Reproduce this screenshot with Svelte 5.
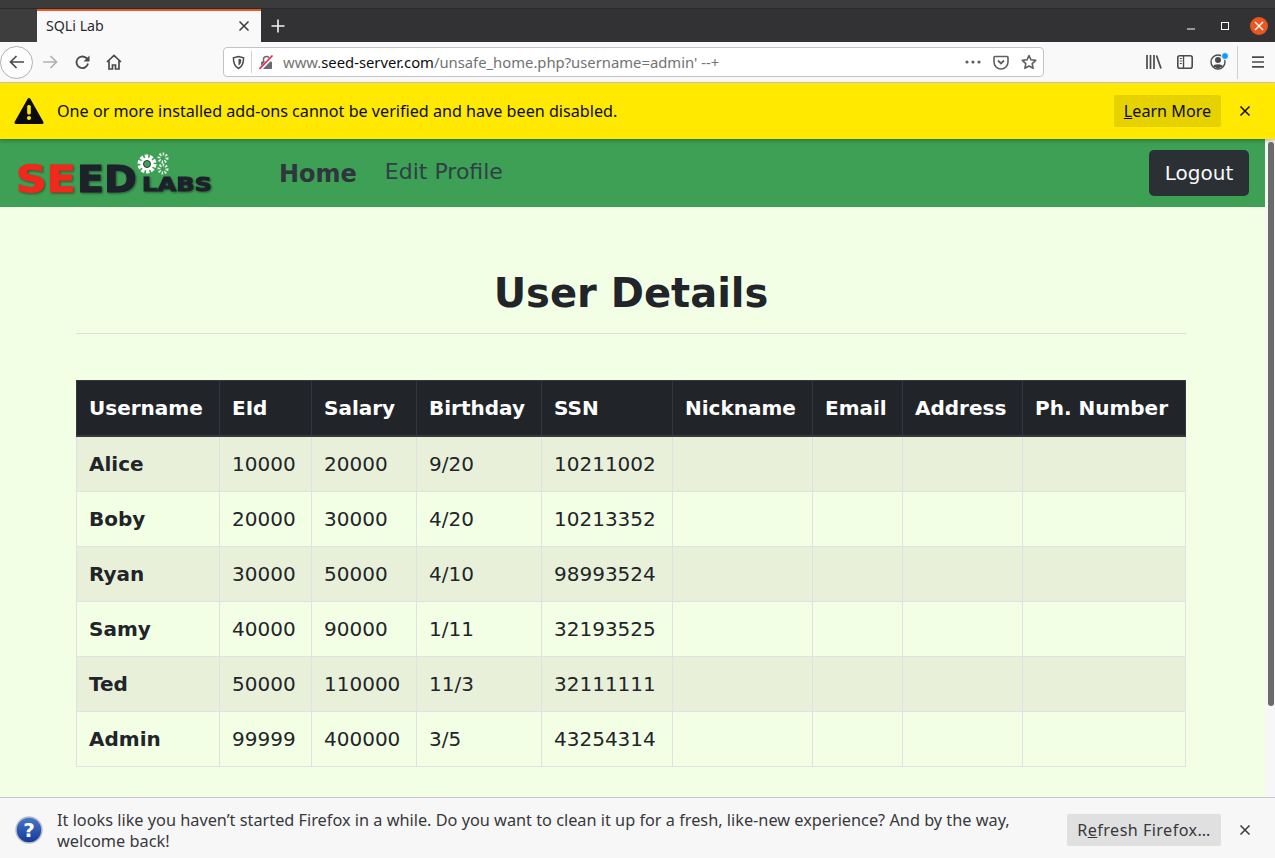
<script>
  const cols = [
    { name: 'Username', w: 143 }, { name: 'EId', w: 92 }, { name: 'Salary', w: 105 },
    { name: 'Birthday', w: 125 }, { name: 'SSN', w: 131 }, { name: 'Nickname', w: 140 },
    { name: 'Email', w: 90 }, { name: 'Address', w: 120 }, { name: 'Ph. Number', w: 163 }
  ];
  const rows = [
    ['Alice', '10000', '20000', '9/20', '10211002'],
    ['Boby', '20000', '30000', '4/20', '10213352'],
    ['Ryan', '30000', '50000', '4/10', '98993524'],
    ['Samy', '40000', '90000', '1/11', '32193525'],
    ['Ted', '50000', '110000', '11/3', '32111111'],
    ['Admin', '99999', '400000', '3/5', '43254314']
  ];
</script>

<div class="window">
  <div class="titlestrip"></div>
  <div class="tabbar">
    <div class="tabspacer"></div>
    <div class="tab">
      <span class="tabtitle">SQLi Lab</span>
      <svg class="tabclose" width="12" height="12" viewBox="0 0 12 12"><path d="M1.5 1.5l9 9M10.5 1.5l-9 9" stroke="#3a3a3c" stroke-width="1.5"/></svg>
    </div>
    <svg class="newtab" width="16" height="16" viewBox="0 0 16 16"><path d="M8 1.5v13M1.5 8h13" stroke="#f2f2f2" stroke-width="1.6"/></svg>
    <div class="wincontrols">
      <svg class="wmin" width="10" height="10" viewBox="0 0 10 10"><path d="M1 8h8" stroke="#fff" stroke-width="1"/></svg>
      <svg class="wmax" width="10" height="10" viewBox="0 0 10 10"><rect x="1.500" y="1.500" width="7" height="7" fill="none" stroke="#fff" stroke-width="1"/></svg>
      <span class="closewin"><svg width="10" height="10" viewBox="0 0 10 10"><path d="M1 1l8 8M9 1l-8 8" stroke="#fff" stroke-width="1.400"/></svg></span>
    </div>
  </div>

  <div class="toolbar">
    <span class="backbtn">
      <svg width="18" height="18" viewBox="0 0 18 18"><path d="M16 9H2.500M8.500 3L2.500 9l6 6" fill="none" stroke="#4a4a4f" stroke-width="1.700"/></svg>
    </span>
    <svg class="fwd" width="18" height="18" viewBox="0 0 18 18"><path d="M2 9h13.500M9.500 3l6 6-6 6" fill="none" stroke="#b1b1b3" stroke-width="1.700"/></svg>
    <svg class="reload" width="17" height="17" viewBox="0 0 17 17"><path d="M14 9.500A5.800 5.800 0 1 1 12 3.800L14.500 6" fill="none" stroke="#4a4a4f" stroke-width="1.800"/><path d="M15.500 1.500v6h-6z" fill="#4a4a4f"/></svg>
    <svg class="home" width="16" height="16" viewBox="0 0 16 16"><path d="M1 8l7-6.500L15 8M3 6.500V15h3.500v-4h3v4H13V6.500" fill="none" stroke="#4a4a4f" stroke-width="1.700"/></svg>

    <div class="urlbar">
      <svg class="shield" width="13" height="15" viewBox="0 0 14 15"><path d="M7 1l5.500 1.500c0 6-1 9.500-5.500 11.500C2.500 12 1.500 8.500 1.500 2.500z" fill="none" stroke="#4a4a4f" stroke-width="1.600"/><path d="M7 3.500l3 .8c0 3.200-.7 5.200-3 6.500z" fill="#4a4a4f"/></svg>
      <span class="sep"></span>
      <svg class="lock" width="15" height="15" viewBox="0 0 15 15"><rect x="2" y="6.500" width="11" height="7.500" rx="1" fill="#6a6a6e"/><path d="M4.500 7V4.500a3 3 0 0 1 6 0V7" fill="none" stroke="#6a6a6e" stroke-width="1.500"/><path d="M1 14.500L14 1" stroke="#fff" stroke-width="3.500"/><path d="M.5 14L13.500 .5" stroke="#e22850" stroke-width="1.600"/></svg>
      <span class="url"><span class="dim">www.</span>seed-server.com<span class="dim">/unsafe_home.php?username=admin' --+</span></span>
      <svg class="dots" width="16" height="4" viewBox="0 0 16 4"><circle cx="2" cy="2" r="1.600" fill="#5f5f63"/><circle cx="8" cy="2" r="1.600" fill="#5f5f63"/><circle cx="14" cy="2" r="1.600" fill="#5f5f63"/></svg>
      <svg class="pocket" width="16" height="15" viewBox="0 0 16 15"><path d="M1 2.500a1 1 0 0 1 1-1h12a1 1 0 0 1 1 1V7a7 7 0 0 1-14 0z" fill="none" stroke="#5f5f63" stroke-width="1.600"/><path d="M5 5.500l3 3 3-3" fill="none" stroke="#5f5f63" stroke-width="1.800"/></svg>
      <svg class="star" width="16" height="16" viewBox="0 0 16 16"><path d="M8 1.500l2 4.300 4.700.6-3.500 3.200.9 4.700L8 12l-4.100 2.300.9-4.700L1.300 6.400 6 5.800z" fill="none" stroke="#5f5f63" stroke-width="1.600" stroke-linejoin="round"/></svg>
    </div>

    <div class="rightbtns">
      <svg width="16" height="14" viewBox="0 0 16 14"><path d="M1 0v14M4.500 0v14M8 0v14M10.500 .5l4.500 13" stroke="#4a4a4f" stroke-width="1.700" fill="none"/></svg>
      <svg class="sidebar" width="16" height="14" viewBox="0 0 16 14"><rect x=".8" y=".8" width="14.400" height="12.400" rx="2" fill="none" stroke="#4a4a4f" stroke-width="1.600"/><path d="M6.500 1v12" stroke="#4a4a4f" stroke-width="1.400"/><path d="M2.800 3.500h2M2.800 6h2M2.800 8.500h2" stroke="#4a4a4f" stroke-width="1.200"/></svg>
      <span class="account">
        <svg width="16" height="16" viewBox="0 0 16 16"><circle cx="8" cy="8" r="7" fill="none" stroke="#4a4a4f" stroke-width="1.400"/><circle cx="8" cy="6" r="3" fill="#4a4a4f"/><path d="M3 12.500c1-3 9-3 10 0L8 14.500z" fill="#4a4a4f"/></svg>
        <span class="dot"></span>
      </span>
      <span class="sep tall"></span>
      <svg class="menu" width="14" height="12" viewBox="0 0 14 12"><path d="M1 1.200h12M1 6h12M1 10.800h12" stroke="#4a4a4f" stroke-width="1.700"/></svg>
    </div>
  </div>

  <div class="notice yellow">
    <svg class="noticeicon" width="30" height="28" viewBox="0 0 30 28"><path d="M15 2.500L28 25.500H2z" fill="#0c0c0d" stroke="#0c0c0d" stroke-width="3" stroke-linejoin="round"/><rect x="13.200" y="8" width="3.600" height="9.500" rx="1.500" fill="#ffe900"/><circle cx="15" cy="21" r="2.100" fill="#ffe900"/></svg>
    <span class="noticetext">One or more installed add-ons cannot be verified and have been disabled.</span>
    <span class="noticebtn learn"><u>L</u>earn More</span>
    <svg class="noticeclose" width="12" height="12" viewBox="0 0 12 12"><path d="M1.500 1.500l9 9M10.500 1.500l-9 9" stroke="#0c0c0d" stroke-width="1.500"/></svg>
  </div>

  <div class="viewport">
    <div class="page">
      <nav class="nav">
        <svg class="logo" width="200" height="60" viewBox="0 0 200 60">
          <g class="logoshadow">
            <text class="seed" x="0" y="46" fill="#f0291c" stroke="#f0291c" textLength="60" lengthAdjust="spacingAndGlyphs">SE</text>
            <text class="seed" x="61" y="46" fill="#1d212b" stroke="#1d212b" textLength="60" lengthAdjust="spacingAndGlyphs">ED</text>
            <text class="labs" x="126" y="45" fill="#1d212b" stroke="#1d212b" textLength="70" lengthAdjust="spacingAndGlyphs">LABS</text>
          </g>
          <g fill="none">
            <circle cx="131" cy="18" r="7" stroke="#fff" stroke-width="5" stroke-dasharray="3 1.400"/>
            <circle cx="131" cy="18" r="5" stroke="#fff" stroke-width="3"/>
            <circle cx="131" cy="18" r="3.500" stroke="#333" stroke-width="1"/>
            <circle cx="147" cy="12" r="4" stroke="#eee" stroke-width="3" stroke-dasharray="1.500 1.500"/>
            <circle cx="147" cy="23" r="4" stroke="#eee" stroke-width="3" stroke-dasharray="1.500 1.500"/>
          </g>
        </svg>
        <a class="home-link">Home</a>
        <a class="edit-link">Edit Profile</a>
        <button class="logout">Logout</button>
      </nav>

      <main class="content">
        <h1>User Details</h1>
        <hr />
        <table>
          <colgroup>
            {#each cols as c}<col style:width="{c.w}px" />{/each}
          </colgroup>
          <thead>
            <tr>{#each cols as c}<th>{c.name}</th>{/each}</tr>
          </thead>
          <tbody>
            {#each rows as r, i}
              <tr class:odd={i % 2 === 0}>
                <th class="rowhead">{r[0]}</th>
                {#each r.slice(1) as v}<td>{v}</td>{/each}
                <td></td><td></td><td></td><td></td>
              </tr>
            {/each}
          </tbody>
        </table>
      </main>
    </div>
    <div class="scrollbar"><span class="thumb"></span></div>
  </div>

  <div class="notice grey">
    <svg class="noticeicon" width="28" height="28" viewBox="0 0 28 28">
      <defs><linearGradient id="qg" x1="0" y1="0" x2="0" y2="1"><stop offset="0" stop-color="#4a78c8"/><stop offset="1" stop-color="#12389a"/></linearGradient></defs>
      <circle cx="14" cy="14" r="13" fill="url(#qg)" stroke="#b9bdc6" stroke-width="1.500"/>
      <text class="q" x="14" y="21" text-anchor="middle" fill="#fff">?</text>
    </svg>
    <span class="noticetext">It looks like you haven’t started Firefox in a while. Do you want to clean it up for a fresh, like-new experience? And by the way, welcome back!</span>
    <span class="noticebtn refresh">R<u>e</u>fresh Firefox…</span>
    <svg class="noticeclose" width="12" height="12" viewBox="0 0 12 12"><path d="M1.500 1.500l9 9M10.500 1.500l-9 9" stroke="#3a3a3c" stroke-width="1.500"/></svg>
  </div>
</div>

<style>
  :global(body) { margin: 0; overflow: hidden; }
  .window {
    width: 1275px; height: 858px; display: flex; flex-direction: column; overflow: hidden;
    font-family: "Noto Sans", "Open Sans", sans-serif; background: #f9f9fa;
  }
  .titlestrip { height: 9px; background: #3b3b3b; border-bottom: 1px solid #2a2a2a; box-sizing: border-box; flex: none; }
  .tabbar { height: 33px; background: #323234; display: flex; align-items: stretch; flex: none; }
  .tabspacer { width: 37px; background: #3d3d3e; flex: none; }
  .tab {
    width: 224px; background: #f9f9fa; border-top: 2px solid #e9561f; box-sizing: border-box;
    display: flex; align-items: center; justify-content: space-between; padding: 0 11px 2px 9px;
  }
  .tabtitle { font-size: 14.200px; color: #2a2a2e; }
  .newtab { align-self: center; margin-left: 9px; }
  .wincontrols { margin-left: auto; display: flex; align-items: center; padding-right: 7px; }
  .wmin { margin-right: 24px; }
  .wmax { margin-right: 20px; }
  .closewin { width: 18px; height: 18px; border-radius: 50%; background: #e9561f; display: flex; align-items: center; justify-content: center; }

  .toolbar { height: 41px; background: #f9f9fa; border-bottom: 1px solid #c8c8ca; box-sizing: border-box; display: flex; align-items: center; flex: none; }
  .backbtn { width: 33px; height: 33px; border: 1px solid #b1b1b3; border-radius: 50%; display: flex; align-items: center; justify-content: center; background: #fdfdfd; box-sizing: border-box; }
  .fwd { margin-left: 8px; }
  .reload { margin-left: 15px; }
  .home { margin-left: 15px; }
  .urlbar {
    width: 821px; height: 30px; margin-left: 101px; background: #fff; border: 1px solid #c4c4c6; border-radius: 4px; box-sizing: border-box;
    display: flex; align-items: center; padding-left: 8px;
  }
  .shield { flex: none; }
  .sep { width: 1px; height: 22px; background: #d0d0d2; margin-left: 6px; flex: none; }
  .lock { margin-left: 7px; flex: none; }
  .url { margin-left: 9px; font-size: 14.800px; color: #0c0c0d; white-space: nowrap; flex: 1; }
  .dim { color: #737373; }
  .dots { margin-right: 12px; flex: none; }
  .pocket { margin-right: 12px; flex: none; }
  .star { margin-right: 6px; flex: none; }
  .rightbtns { margin-left: 102px; display: flex; align-items: center; gap: 16px; }
  .sidebar { margin-left: -1px; }
  .account { position: relative; display: flex; margin-left: 1px; }
  .dot { position: absolute; top: -2px; right: -3px; width: 6px; height: 6px; border-radius: 50%; background: #0a9dff; border: 1px solid #f9f9fa; }
  .sep.tall { height: 33px; margin-left: -5px; }
  .menu { margin-left: -3px; }

  .notice { display: flex; align-items: center; flex: none; box-sizing: border-box; }
  .yellow { height: 56px; background: #ffe900; color: #0c0c0d; padding-left: 14px; box-shadow: 0 2px 4px rgba(0,0,0,.25); position: relative; z-index: 1; }
  .grey { height: 61px; background: #f7f7f7; color: #38383d; border-top: 1px solid #c8c8ca; padding: 4px 0 0 15px; }
  .noticeicon { flex: none; }
  .noticetext { font-size: 16.150px; line-height: 21px; margin-left: 13px; flex: 1; min-width: 0; }
  .grey .noticetext { margin: 2px 0 0 14px; padding-right: 50px; font-size: 16.300px; }
  .noticebtn { flex: none; height: 32px; line-height: 32px; border-radius: 2px; font-size: 16.150px; text-align: center; box-sizing: border-box; }
  .learn { width: 107px; background: #e5d200; }
  .refresh { width: 154px; background: #e0e0e1; color: #38383d; letter-spacing: .45px; }
  .noticeclose { flex: none; margin: 0 24px 0 18px; }

  .viewport { flex: 1; min-height: 0; display: flex; background: #f3ffe5; }
  .page { flex: 1; min-width: 0; font-family: "DejaVu Sans", sans-serif; }
  .scrollbar { width: 10px; background: #f7f7f7; flex: none; position: relative; }
  .thumb { position: absolute; left: 3px; top: 3px; width: 6px; height: 564px; border-radius: 3px; background: #6b6b6b; }

  .nav { height: 68px; background: #3ea055; display: flex; align-items: center; position: relative; }
  .logo { margin-left: 16px; flex: none; margin-top: 6px; }
  .logoshadow { filter: drop-shadow(1px 1px 1px rgba(0,0,0,.45)); }
  .seed { font-family: "DejaVu Sans", sans-serif; font-weight: 700; font-size: 37px; stroke-width: 1px; }
  .labs { font-family: "DejaVu Sans", sans-serif; font-weight: 700; font-size: 19px; }
  .q { font-family: "DejaVu Sans", sans-serif; font-weight: 700; font-size: 20px; }
  .home-link { margin: 2px 0 0 63px; font-size: 24px; font-weight: 700; color: #2e353c; }
  .edit-link { margin: 0 0 3px 28px; font-size: 22px; color: #2f3f45; }
  .logout {
    margin-left: auto; margin-right: 16px; width: 100px; height: 46px; background: #2b3035; color: #f8f9fa;
    border: 0; border-radius: 5px; font: 20px "DejaVu Sans", sans-serif;
  }

  .content { width: 1110px; margin-left: 76px; }
  h1 { margin: 58px 0 0; font-size: 40px; line-height: 56px; font-weight: 700; text-align: center; color: #212529; }
  hr { margin: 12px 0 46px; border: 0; border-top: 1px solid #dcdfd5; }
  table { width: 1109px; table-layout: fixed; border-collapse: collapse; font-size: 20px; color: #212529; }
  th, td { border: 1px solid #dee2e6; padding: 12px 12px; line-height: 30px; text-align: left; white-space: nowrap; height: 30px; }
  thead th { background: #212529; color: #fff; border-color: #32383e; border-bottom-width: 2px; border-bottom-color: #343a40; }
  .odd { background: #e9f0da; }
  .rowhead { font-weight: 700; }
</style>
